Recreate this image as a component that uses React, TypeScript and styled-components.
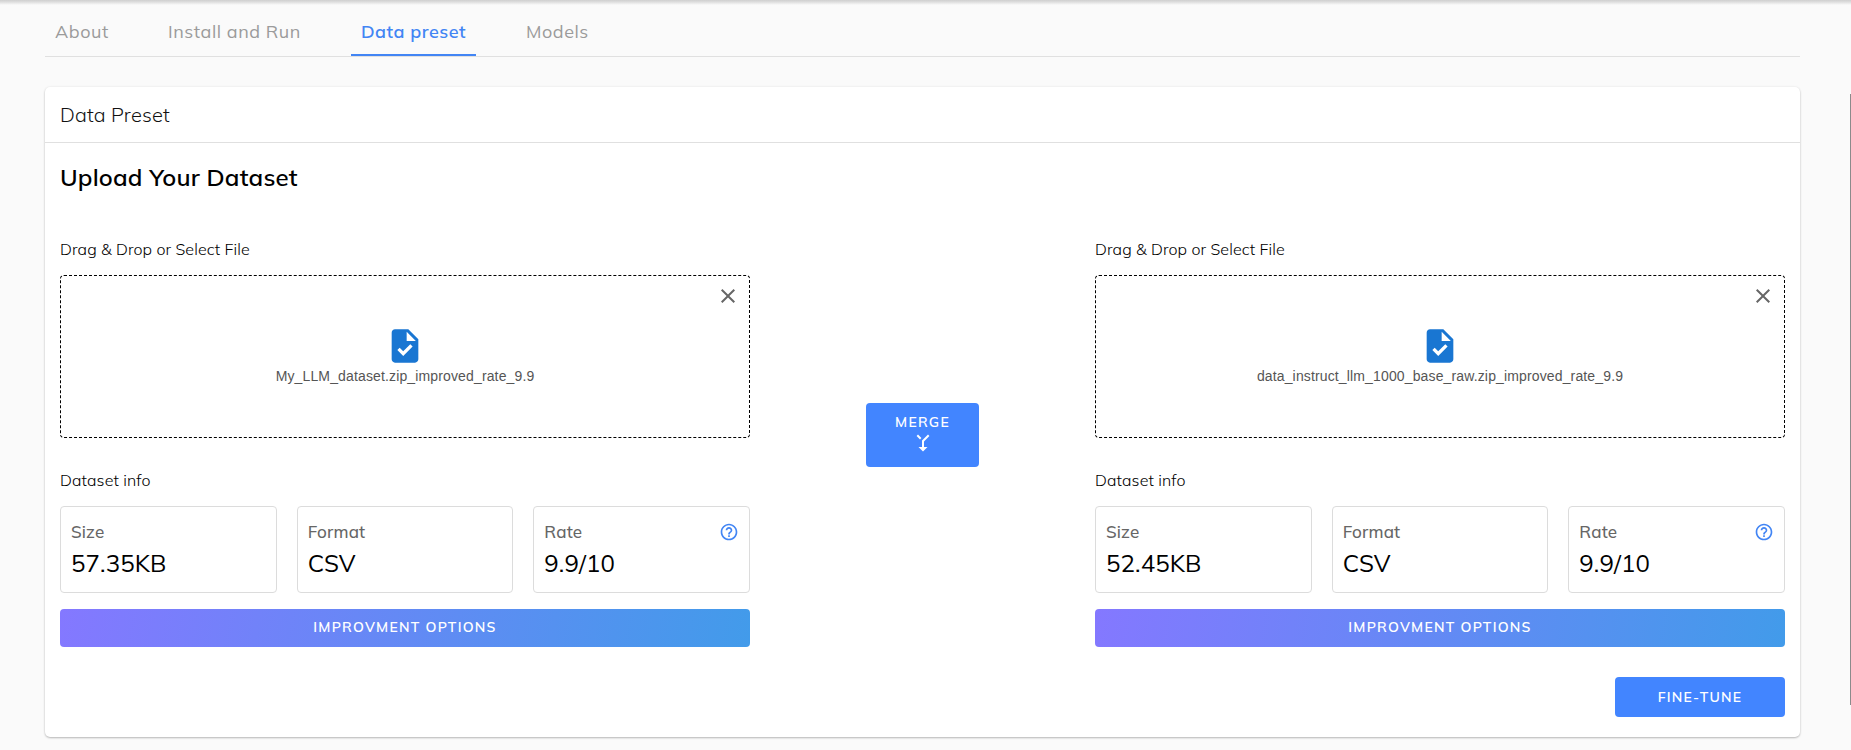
import React from "react";
import styled, { createGlobalStyle } from "styled-components";

const GlobalStyle = createGlobalStyle`
  * { box-sizing: border-box; }
  html, body { margin: 0; height: 750px; overflow: hidden; background: #fafafa; }
  body { font-family: Mulish, Lato, "Open Sans", sans-serif; color: #000; }
  button { font-family: inherit; border: 0; margin: 0; padding: 0; cursor: pointer; }
`;

const Page = styled.div`
  position: relative;
  height: 750px;
  padding: 0 51px 0 45px;
  background: #fafafa;
`;

const TopShadow = styled.div`
  position: absolute;
  top: 0;
  left: 0;
  right: 0;
  height: 5px;
  background: linear-gradient(#cfcfcf, #dedede 40%, #fafafa);
`;

const ScrollThumb = styled.div`
  position: absolute;
  top: 94px;
  right: 0;
  width: 1px;
  height: 611px;
  background: #8b8b8b;
`;

const Tabs = styled.nav`
  display: flex;
  gap: 40px;
  height: 57px;
  border-bottom: 1px solid #e0e0e0;
`;

const Tab = styled.button<{ $active?: boolean; $width: number }>`
  width: ${(p) => p.$width}px;
  height: 56px;
  padding: 8px 0 0 10px;
  text-align: left;
  white-space: nowrap;
  background: transparent;
  border-bottom: 2px solid ${(p) => (p.$active ? "#4285f4" : "transparent")};
  color: ${(p) => (p.$active ? "#4285f4" : "#9b9b9b")};
  font-size: 18px;
  font-weight: ${(p) => (p.$active ? 600 : 400)};
  letter-spacing: ${(p) => (p.$active ? 0.5 : 0.55)}px;
`;

const Card = styled.section`
  margin-top: 30px;
  height: 650px;
  background: #fff;
  border-radius: 5px;
  box-shadow: 0 1px 2px rgba(0, 0, 0, 0.25), 0 0 3px rgba(0, 0, 0, 0.06);
`;

const CardHeader = styled.header`
  height: 56px;
  padding: 0 15px;
  line-height: 55px;
  border-bottom: 1px solid #e0e0e0;
  color: #111;
  font-size: 20px;
  font-weight: 300;
  letter-spacing: 0.15px;
`;

const Title = styled.h2`
  margin: 0;
  padding: 18px 15px 1px;
  font-size: 24px;
  line-height: 32px;
  font-weight: 600;
  letter-spacing: 0.2px;
`;

const Columns = styled.div`
  display: grid;
  grid-template-columns: 690px 1fr 690px;
  padding: 0 15px;
  margin-top: 45px;
`;

const Column = styled.div`
  display: flex;
  flex-direction: column;
`;

const Label = styled.div`
  height: 20px;
  line-height: 20px;
  font-size: 16px;
  font-weight: 300;
  letter-spacing: 0.12px;
`;

const DropZone = styled.div`
  position: relative;
  display: flex;
  flex-direction: column;
  align-items: center;
  height: 163px;
  margin: 16px 0 32px;
  padding-top: 50px;
  border: 1px dashed #000;
  border-radius: 4px;
`;

const FileName = styled.div`
  margin-top: 1px;
  font-family: "Liberation Sans", Arial, sans-serif;
  font-size: 14px;
  line-height: 18px;
  letter-spacing: 0.14px;
  color: #555;
`;

const CloseButton = styled.button`
  position: absolute;
  top: 8px;
  right: 9px;
  width: 24px;
  height: 24px;
  background: transparent;
`;

const Stats = styled.div`
  display: grid;
  grid-template-columns: repeat(3, 1fr);
  gap: 20px;
  margin: 16px 0;
`;

const Stat = styled.div`
  height: 87px;
  padding: 13px 10px;
  border: 1px solid #dcdcdc;
  border-radius: 4px;
`;

const StatHead = styled.div`
  display: flex;
  justify-content: space-between;
  height: 24px;
  line-height: 24px;
  color: #666;
  font-size: 17px;
  font-weight: 500;
  letter-spacing: 0.15px;

  svg {
    margin-top: 2px;
  }
`;

const StatValue = styled.div`
  height: 36px;
  line-height: 36px;
  margin-top: 1px;
  font-size: 24px;
  letter-spacing: 0.12px;
`;

const Improve = styled.button`
  height: 38px;
  padding-bottom: 2px;
  border-radius: 4px;
  background: linear-gradient(100deg, #8478ff, #429bea);
  color: #fff;
  font-size: 14px;
  font-weight: 600;
  letter-spacing: 1.25px;
`;

const MergeCell = styled.div`
  display: flex;
  justify-content: center;
  padding-top: 164px;
`;

const Merge = styled.button`
  display: flex;
  flex-direction: column;
  align-items: center;
  width: 113px;
  height: 64px;
  padding-top: 9px;
  border-radius: 4px;
  background: #4285ff;
  color: #fff;
  font-size: 14px;
  line-height: 20px;
  font-weight: 600;
  letter-spacing: 1.25px;

  svg {
    margin-top: -1px;
    transform: rotate(180deg);
  }
`;

const Footer = styled.footer`
  display: flex;
  justify-content: flex-end;
  padding: 30px 15px 0;
`;

const FineTune = styled.button`
  width: 170px;
  height: 40px;
  border-radius: 4px;
  background: #4285ff;
  color: #fff;
  font-size: 14px;
  font-weight: 600;
  letter-spacing: 1.25px;
`;

const FileIcon = () => (
  <svg width="40" height="40" viewBox="0 0 24 24" fill="#1976d2">
    <path d="M14 2H6c-1.1 0-1.99.9-1.99 2L4 20c0 1.1.89 2 1.99 2H18c1.1 0 2-.9 2-2V8l-6-6zm-3.06 16L7.4 14.46l1.41-1.41 2.12 2.12 4.24-4.24 1.41 1.41L10.94 18zM13 9V3.5L18.5 9H13z" />
  </svg>
);

const CloseIcon = () => (
  <svg width="24" height="24" viewBox="0 0 24 24" fill="#666" display="block">
    <path d="M19 6.41L17.59 5 12 10.59 6.41 5 5 6.41 10.59 12 5 17.59 6.41 19 12 13.41 17.59 19 19 17.59 13.41 12z" />
  </svg>
);

const HelpIcon = () => (
  <svg width="20" height="20" viewBox="0 0 24 24" fill="#4285f4">
    <path d="M11 18h2v-2h-2v2zm1-16C6.48 2 2 6.48 2 12s4.48 10 10 10 10-4.48 10-10S17.52 2 12 2zm0 18c-4.41 0-8-3.59-8-8s3.59-8 8-8 8 3.59 8 8-3.59 8-8 8zm0-14c-2.21 0-4 1.79-4 4h2c0-1.1.9-2 2-2s2 .9 2 2c0 2-3 1.75-3 5h2c0-2.25 3-2.5 3-5 0-2.21-1.79-4-4-4z" />
  </svg>
);

const MergeIcon = () => (
  <svg width="24" height="24" viewBox="0 0 24 24" fill="#fff">
    <path d="M17 20.41L18.41 19 15 15.59 13.59 17 17 20.41zM7.5 8H11v5.59L5.59 19 7 20.41l6-6V8h3.5L12 3.5 7.5 8z" />
  </svg>
);

type Dataset = { file: string; size: string };

const DatasetColumn = ({ file, size }: Dataset) => (
  <Column>
    <Label>Drag &amp; Drop or Select File</Label>
    <DropZone>
      <CloseButton aria-label="Remove file">
        <CloseIcon />
      </CloseButton>
      <FileIcon />
      <FileName>{file}</FileName>
    </DropZone>
    <Label>Dataset info</Label>
    <Stats>
      <Stat>
        <StatHead>Size</StatHead>
        <StatValue>{size}</StatValue>
      </Stat>
      <Stat>
        <StatHead>Format</StatHead>
        <StatValue>CSV</StatValue>
      </Stat>
      <Stat>
        <StatHead>
          Rate
          <HelpIcon />
        </StatHead>
        <StatValue>9.9/10</StatValue>
      </Stat>
    </Stats>
    <Improve>IMPROVMENT OPTIONS</Improve>
  </Column>
);

export default function App() {
  return (
    <Page>
      <GlobalStyle />
      <TopShadow />
      <ScrollThumb />
      <Tabs>
        <Tab $width={73}>About</Tab>
        <Tab $width={153}>Install and Run</Tab>
        <Tab $width={125} $active>Data preset</Tab>
        <Tab $width={82}>Models</Tab>
      </Tabs>
      <Card>
        <CardHeader>Data Preset</CardHeader>
        <Title>Upload Your Dataset</Title>
        <Columns>
          <DatasetColumn file="My_LLM_dataset.zip_improved_rate_9.9" size="57.35KB" />
          <MergeCell>
            <Merge>
              MERGE
              <MergeIcon />
            </Merge>
          </MergeCell>
          <DatasetColumn file="data_instruct_llm_1000_base_raw.zip_improved_rate_9.9" size="52.45KB" />
        </Columns>
        <Footer>
          <FineTune>FINE-TUNE</FineTune>
        </Footer>
      </Card>
    </Page>
  );
}
